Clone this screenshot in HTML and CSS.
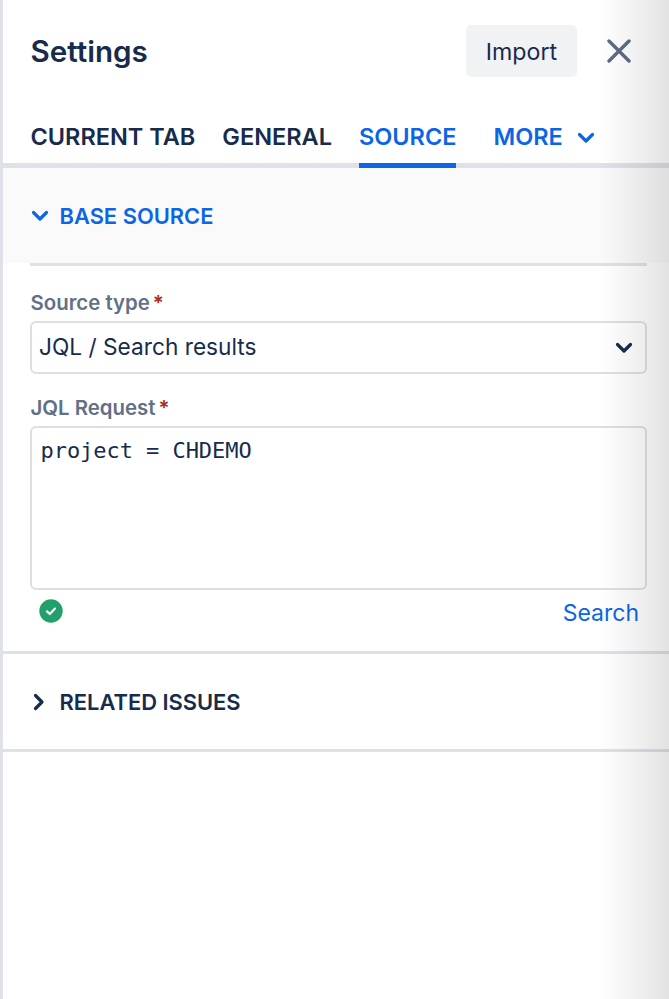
FILE: index.html
```html
<!DOCTYPE html>
<html lang="en">
<head>
<meta charset="utf-8">
<title>Settings</title>
<link rel="stylesheet" href="styles.css">
</head>
<body>
<div class="panel">
  <header class="head">
    <h1 class="title">Settings</h1>
    <div class="head-actions">
      <button class="import">Import</button>
      <svg class="close" viewBox="0 0 24 24" width="24" height="24"><path d="M2 2 L22 22 M22 2 L2 22" fill="none" stroke="#5e6c84" stroke-width="3.4" stroke-linecap="round"/></svg>
    </div>
  </header>
  <nav class="tabs">
    <span class="tab">CURRENT TAB</span>
    <span class="tab">GENERAL</span>
    <span class="tab active">SOURCE</span>
    <span class="tab more">MORE
      <svg class="more-icon" viewBox="0 0 18 12" width="18" height="12"><path d="M2.5 2.5 L9 9 L15.5 2.5" fill="none" stroke="#0c66e4" stroke-width="3.2" stroke-linecap="round" stroke-linejoin="round"/></svg>
    </span>
  </nav>
  <section class="base-head">
    <svg viewBox="0 0 18 12" width="18" height="12"><path d="M2.5 2.5 L9 9 L15.5 2.5" fill="none" stroke="#0c66e4" stroke-width="3.2" stroke-linecap="round" stroke-linejoin="round"/></svg>
    <span class="base-title">BASE SOURCE</span>
  </section>
  <div class="base-body">
    <label class="label">Source type<span class="req">*</span></label>
    <div class="select">
      <span>JQL / Search results</span>
      <svg viewBox="0 0 18 12" width="18" height="12"><path d="M2.5 2.5 L9 9 L15.5 2.5" fill="none" stroke="#172b4d" stroke-width="3.2" stroke-linecap="round" stroke-linejoin="round"/></svg>
    </div>
    <label class="label label-jql">JQL Request<span class="req">*</span></label>
    <div class="textarea">project = CHDEMO</div>
    <div class="below">
      <svg class="ok" viewBox="0 0 24 24" width="24" height="24"><circle cx="12" cy="12" r="11.7" fill="#22a06b"/><path d="M8 12.4 L10.8 15 L16 9.6" fill="none" stroke="#fff" stroke-width="2.2" stroke-linecap="round" stroke-linejoin="round"/></svg>
      <span class="search">Search</span>
    </div>
  </div>
  <section class="related">
    <svg viewBox="0 0 12 18" width="12" height="18"><path d="M2.5 2.5 L9 9 L2.5 15.5" fill="none" stroke="#172b4d" stroke-width="3.2" stroke-linecap="round" stroke-linejoin="round"/></svg>
    <span class="related-title">RELATED ISSUES</span>
  </section>
  <div class="shade"></div>
</div>
</body>
</html>
```
FILE: styles.css
```css
* { box-sizing: border-box; }
html, body { margin: 0; padding: 0; background: #fff; }
body { font-family: Inter, "Liberation Sans", sans-serif; color: #172b4d; }
.panel {
  position: relative;
  width: 669px;
  height: 999px;
  overflow: hidden;
  border-left: 3px solid #dfe1e8;
}
.head {
  height: 116px;
  padding: 25px 38px 0 27.5px;
  display: flex;
  justify-content: space-between;
  align-items: flex-start;
}
.title {
  margin: 0;
  font-size: 29.6px;
  line-height: 52px;
  font-weight: 600;
}
.head-actions { display: flex; align-items: center; gap: 30px; }
.import {
  width: 111px;
  height: 52px;
  border: 0;
  border-radius: 5px;
  background: #f1f2f4;
  color: #172b4d;
  padding: 2px 0 0;
  font: 400 23.2px Inter, "Liberation Sans", sans-serif;
}
.close { display: block; }
.tabs {
  height: 52px;
  display: flex;
  padding-left: 27.5px;
  border-bottom: 5px solid #dfe1e8;
}
.tab {
  height: 52px;
  font-size: 23.5px;
  font-weight: 600;
  line-height: 42px;
  margin-right: 27px;
  white-space: nowrap;
}
.active {
  color: #0c66e4;
  border-bottom: 5px solid #0c66e4;
  margin-right: 37px;
}
.more { color: #0c66e4; display: flex; align-items: center; height: 41px; }
.more-icon { margin-left: 14px; margin-top: 3px; }
.base-head {
  height: 95px;
  background: #fafafb;
  padding: 1px 0 0 27.5px;
  display: flex;
  align-items: center;
  gap: 11px;
}
.base-title { font-size: 21.9px; font-weight: 600; color: #0c66e4; line-height: 24px; }
.base-body {
  margin: 0 22px 0 27px;
  border-top: 3px solid #dfe1e8;
  padding-top: 25px;
}
.label {
  display: block;
  padding-left: 0.5px;
  font-size: 20.4px;
  line-height: 24px;
  font-weight: 600;
  color: #626f86;
}
.req { color: #ae2a19; margin-left: 3px; }
.select {
  margin-top: 6px;
  height: 53px;
  border: 2px solid #dcdfe4;
  border-radius: 6px;
  padding: 0 12px 2px 7px;
  display: flex;
  justify-content: space-between;
  align-items: center;
  font-size: 22.7px;
}
.select svg { margin-top: 2px; }
.label-jql { margin-top: 22px; }
.textarea {
  margin-top: 6px;
  height: 164px;
  border: 2px solid #dcdfe4;
  border-radius: 6px;
  padding: 9px 8.5px;
  font-family: "DejaVu Sans Mono", monospace;
  font-size: 22px;
  line-height: 28px;
  letter-spacing: -0.05px;
}
.below {
  height: 61px;
  display: flex;
  justify-content: space-between;
  align-items: flex-start;
  padding: 9px 8px 0 8.5px;
}
.search { color: #0c66e4; font-size: 23px; line-height: 28px; }
.related {
  height: 101px;
  border-top: 3px solid #dfe1e8;
  border-bottom: 3px solid #dfe1e8;
  padding-left: 30px;
  display: flex;
  align-items: center;
  gap: 14.5px;
}
.related-title { font-size: 21.9px; font-weight: 600; line-height: 24px; }
.shade {
  position: absolute;
  top: 0;
  right: 0;
  bottom: 0;
  width: 69px;
  pointer-events: none;
  background: linear-gradient(to right, rgba(0,0,0,0), rgba(0,0,0,0.03) 29%, rgba(0,0,0,0.07) 65%, rgba(0,0,0,0.115));
}
```
